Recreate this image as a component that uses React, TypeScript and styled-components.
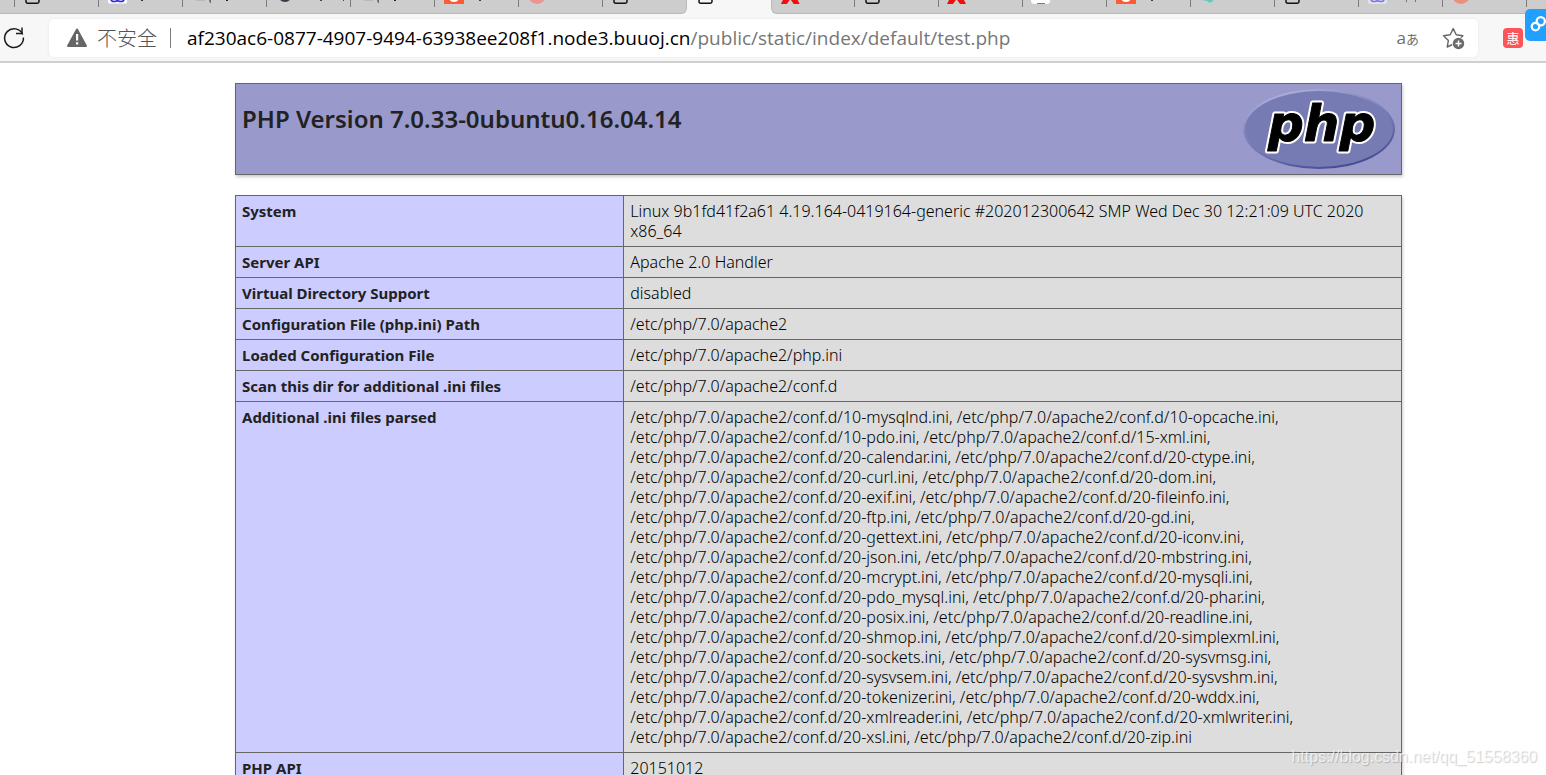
import React from "react";
import styled, { createGlobalStyle, css } from "styled-components";

const Global = createGlobalStyle`
  *, *::before, *::after { box-sizing: border-box; }
  body { margin: 0; background: #fff; color: #222; font-family: "Open Sans", "Noto Sans CJK SC", sans-serif; }
`;

const Window = styled.div`
  display: flex;
  flex-direction: column;
  height: 100vh;
  overflow: hidden;
  position: relative;
`;

/* ---------- tab strip ---------- */

const TabStrip = styled.nav`
  display: flex;
  flex: none;
  height: 14px;
  overflow: hidden;
  background: #f7f7f7;
`;

const Tab = styled.button<{ $divider?: boolean }>`
  display: flex;
  flex: none;
  align-items: flex-start;
  width: 84px;
  height: 7px;
  padding: 0;
  border: 0;
  border-left: 1px solid ${(p) => (p.$divider ? "#7b7b7b" : "transparent")};
  background: none;
  overflow: hidden;
`;

const TabGroup = styled.div<{ $side: "left" | "right" }>`
  display: flex;
  background: #cdcdcd;
  border-bottom: 1px solid #b9b9b9;
  ${(p) =>
    p.$side === "left"
      ? css`
          flex: none;
          padding-left: 14px;
          border-right: 1px solid #b9b9b9;
          border-bottom-right-radius: 6px;
        `
      : css`
          flex: 1;
          min-width: 0;
          overflow: hidden;
          border-left: 1px solid #b9b9b9;
          border-bottom-left-radius: 6px;

          ${Tab}:first-child {
            width: 82px;
          }
        `}
`;

type Kind = "doc" | "paw" | "text" | "round" | "orange" | "pink" | "red" | "google" | "teal" | "violet" | "peach" | "none";

const tabArt: Record<Kind, React.ReactNode> = {
  doc: <path d="M11-6V1.500Q11 3.200 12.700 3.200H22.300Q24 3.200 24 1.500V-6" fill="none" stroke="#111" strokeWidth="1.500" />,
  paw: (
    <>
      <path d="M9-6H28V2Q28 3.500 26.500 3.500H10.500Q9 3.500 9 2Z" fill="#fff" />
      <path d="M12-1Q12 1.500 15 1.500T18.500 0Q19 1.500 22 1.500T25-1" fill="none" stroke="#2a2ae0" strokeWidth="1.600" />
      <path d="M42 0h2v1h-2z" fill="#333" />
    </>
  ),
  text: (
    <>
      <path d="M13 0h9v1h-9z" fill="#b9b9b9" />
      <path d="M26 0h2v3h-1z" fill="#666" />
      <path d="M43 0h2v1h-2z" fill="#222" />
    </>
  ),
  round: (
    <>
      <circle cx="18" cy="-5" r="7" fill="#3a3848" />
      <path d="M53 0h2v1h-2zM76 0h1v1h-1z" fill="#444" />
    </>
  ),
  orange: (
    <>
      <path d="M9-8H29V4H9Z" fill="#ff5a33" />
      <path d="M14-3H24Q24 2 19 2T14-3Z" fill="#fff" />
      <path d="M44 0h2v1h-2z" fill="#345" />
    </>
  ),
  pink: <circle cx="18" cy="-5" r="9" fill="#e99595" />,
  red: <path d="M8 4L13-6H22L27 4H21L17.500-1L14 4Z" fill="#f30d0d" />,
  google: (
    <>
      <path d="M8-6H27V1Q27 4 23 4H12Q8 4 8 1Z" fill="#fff" />
      <path d="M14 3h4v1h-4z" fill="#e44b5b" />
      <path d="M18 3h4v1h-4z" fill="#3c83f0" />
    </>
  ),
  teal: <path d="M11 0L13-3H22V1L19 3L16 1Z" fill="#67c9b8" />,
  violet: (
    <>
      <path d="M9-6H28V2Q28 4 26 4H11Q9 4 9 2Z" fill="#e3e2ec" />
      <path d="M12-1Q12 1.500 15 1.500T18.500 0Q19 1.500 22 1.500T25-1" fill="none" stroke="#7a7ae0" strokeWidth="1.600" />
      <path d="M47 0h1v2h-1zM56 0h1v2h-1z" fill="#87705f" />
    </>
  ),
  peach: (
    <>
      <circle cx="18" cy="-5" r="9" fill="#e8917c" />
      <path d="M11-2Q15 2 21-2Z" fill="#d4d0cf" />
    </>
  ),
  none: null,
};

const TabIcon = ({ kind }: { kind: Kind }) => (
  <svg width="82" height="6" viewBox="0 0 82 6" aria-hidden="true">
    {tabArt[kind]}
  </svg>
);

const leftTabs: Kind[] = ["doc", "paw", "text", "round", "text", "orange", "pink", "doc"];
const rightTabs: Kind[] = ["red", "doc", "red", "google", "orange", "teal", "doc", "violet", "peach", "none"];

/* ---------- toolbar ---------- */

const Toolbar = styled.header`
  display: flex;
  flex: none;
  align-items: center;
  height: 49px;
  padding-top: 1px;
  background: #f7f7f7;
  border-bottom: 2px solid #cfcfcf;
`;

const IconButton = styled.button`
  display: flex;
  flex: none;
  padding: 0;
  border: 0;
  background: none;
`;

const ReloadButton = styled(IconButton)`
  width: 49px;
  padding-left: 2px;
`;

const AddressBar = styled.div`
  display: flex;
  flex: 1;
  align-items: center;
  min-width: 0;
  height: 38px;
  padding: 0 12px 0 17px;
  border-radius: 5px;
  background: #fff;
  box-shadow: 0 0 3px #e6e6e6;
`;

const SecurityLabel = styled.span`
  margin-left: 9px;
  padding-right: 13px;
  color: #555;
  font-family: "Noto Sans CJK SC", sans-serif;
  font-weight: 300;
  font-size: 20px;
  line-height: 30px;
`;

const Divider = styled.span`
  width: 1px;
  height: 20px;
  margin-right: 16px;
  background: #7d7d7d;
`;

const Url = styled.div`
  flex: 1;
  min-width: 0;
  overflow: hidden;
  white-space: nowrap;
  color: #767676;
  font-size: 19px;
  line-height: 30px;
`;

const Host = styled.span`
  color: #000;
`;

const TranslateButton = styled(IconButton)`
  align-items: baseline;
  margin-right: 23px;
  color: #6e6e6e;
  font-family: "Open Sans", "Noto Sans CJK JP", sans-serif;
  font-size: 17px;
  line-height: 24px;
`;

const Kana = styled.span`
  font-family: "Noto Sans CJK JP", sans-serif;
  font-size: 13px;
`;

const Extensions = styled.div`
  flex: none;
  width: 68px;
  padding-left: 25px;
`;

const RedExtension = styled(IconButton)`
  align-items: center;
  justify-content: center;
  width: 20px;
  height: 20px;
  border-radius: 4px;
  background: #fb5558;
  color: #fff;
  font-family: "Noto Sans CJK SC", sans-serif;
  font-size: 13px;
  line-height: 18px;
`;

const FloatingButton = styled(IconButton)`
  position: absolute;
  top: 9px;
  right: 0;
  width: 21px;
  height: 32px;
  align-items: center;
  border-radius: 5px 0 0 5px;
  background: #22a0ff;
  overflow: hidden;
`;

/* ---------- page ---------- */

const Page = styled.main`
  flex: 1;
  min-height: 0;
  overflow: hidden;
  padding: 20px 144px 0 235px;
`;

const Banner = styled.section`
  display: flex;
  align-items: flex-start;
  justify-content: space-between;
  min-height: 92px;
  padding: 5px 6px;
  border: 1px solid #666;
  background: #9999cc;
  box-shadow: 1px 2px 3px #ccc;
`;

const Title = styled.h1`
  margin: 14px 0 0;
  font-family: "Noto Sans", sans-serif;
  font-size: 24px;
  font-weight: 600;
  line-height: 32px;
`;

const InfoTable = styled.table`
  width: 100%;
  margin-top: 20px;
  border-collapse: collapse;
  table-layout: fixed;
  box-shadow: 1px 2px 3px #ccc;
  line-height: 20px;
`;

const cell = css`
  padding: 5px 6px;
  border: 1px solid #666;
  text-align: left;
  vertical-align: top;
`;

const Name = styled.th`
  ${cell}
  width: 33.3%;
  background: #ccccff;
  font-family: "Noto Sans", sans-serif;
  font-size: 15px;
  font-weight: 700;
`;

const Value = styled.td`
  ${cell}
  background: #dddddd;
  color: #000;
  font-family: "Noto Sans", sans-serif;
  font-size: 16px;
  font-weight: 300;
  white-space: pre-line;
`;

const Watermark = styled.div`
  position: absolute;
  right: 9px;
  bottom: 8px;
  color: rgba(255, 255, 255, 0.7);
  font-family: "Liberation Sans", sans-serif;
  font-size: 16px;
  line-height: 20px;
  text-shadow: 1px 1px 1px rgba(0, 0, 0, 0.2);
  pointer-events: none;
`;

const iniPairs = [
  ["10-mysqlnd", "10-opcache"],
  ["10-pdo", "15-xml"],
  ["20-calendar", "20-ctype"],
  ["20-curl", "20-dom"],
  ["20-exif", "20-fileinfo"],
  ["20-ftp", "20-gd"],
  ["20-gettext", "20-iconv"],
  ["20-json", "20-mbstring"],
  ["20-mcrypt", "20-mysqli"],
  ["20-pdo_mysql", "20-phar"],
  ["20-posix", "20-readline"],
  ["20-shmop", "20-simplexml"],
  ["20-sockets", "20-sysvmsg"],
  ["20-sysvsem", "20-sysvshm"],
  ["20-tokenizer", "20-wddx"],
  ["20-xmlreader", "20-xmlwriter"],
  ["20-xsl", "20-zip"],
];

const iniFiles = iniPairs
  .map((pair) => pair.map((name) => `/etc/php/7.0/apache2/conf.d/${name}.ini`).join(", "))
  .join(",\n");

const rows: [string, string][] = [
  ["System", "Linux 9b1fd41f2a61 4.19.164-0419164-generic #202012300642 SMP Wed Dec 30 12:21:09 UTC 2020\nx86_64"],
  ["Server API", "Apache 2.0 Handler"],
  ["Virtual Directory Support", "disabled"],
  ["Configuration File (php.ini) Path", "/etc/php/7.0/apache2"],
  ["Loaded Configuration File", "/etc/php/7.0/apache2/php.ini"],
  ["Scan this dir for additional .ini files", "/etc/php/7.0/apache2/conf.d"],
  ["Additional .ini files parsed", iniFiles],
  ["PHP API", "20151012"],
];

const PhpLogo = () => (
  <svg width="152" height="80" viewBox="0 0 152 80" role="img" aria-label="PHP logo">
    <defs>
      <linearGradient id="rim" x1="0.25" y1="0" x2="0.75" y2="1">
        <stop offset="0" stopColor="#b0b2dc" />
        <stop offset="0.35" stopColor="#8488bf" />
        <stop offset="0.65" stopColor="#6a6dab" />
        <stop offset="1" stopColor="#43458c" />
      </linearGradient>
    </defs>
    <ellipse cx="76" cy="40" rx="76" ry="40" fill="url(#rim)" />
    <ellipse cx="76" cy="40" rx="74" ry="38" fill="#777bb3" />
    <g fontFamily="DejaVu Sans" fontWeight="700" fontStyle="italic" fontSize="50" strokeLinejoin="round">
      <text x="25" y="52" fill="#fff" stroke="#fff" strokeWidth="5">php</text>
      <text x="25" y="52" fill="#000" stroke="#000" strokeWidth="1">php</text>
    </g>
  </svg>
);

export default function App() {
  return (
    <Window>
      <Global />
      <TabStrip aria-label="Tabs">
        <TabGroup $side="left">
          {leftTabs.map((kind, i) => (
            <Tab key={i} $divider aria-label={`Tab ${i + 1}`}>
              <TabIcon kind={kind} />
            </Tab>
          ))}
        </TabGroup>
        <Tab aria-label="Current tab">
          <TabIcon kind="doc" />
        </Tab>
        <TabGroup $side="right">
          {rightTabs.map((kind, i) => (
            <Tab key={i} $divider={i > 0} aria-label={`Tab ${i + 10}`}>
              <TabIcon kind={kind} />
            </Tab>
          ))}
        </TabGroup>
      </TabStrip>

      <Toolbar>
        <ReloadButton aria-label="Reload">
          <svg width="24" height="24" viewBox="0 0 24 24" fill="none" stroke="#1c1c1c" strokeWidth="1.500">
            <path d="M20.700 8.500A9.400 9.400 0 1 0 21.400 11.500" />
            <path d="M20 1.500V7.500H14" />
          </svg>
        </ReloadButton>
        <AddressBar>
          <svg width="22" height="20" viewBox="0 0 22 20" aria-hidden="true">
            <path d="M11 1.500L20 18H2Z" fill="#666" stroke="#666" strokeWidth="2" strokeLinejoin="round" />
            <path d="M10 6h2.200v6.500H10zM10 14.200h2.200v2.200H10z" fill="#fff" />
          </svg>
          <SecurityLabel>不安全</SecurityLabel>
          <Divider />
          <Url role="textbox" aria-label="Address" tabIndex={0}>
            <Host>af230ac6-0877-4907-9494-63938ee208f1.node3.buuoj.cn</Host>/public/static/index/default/test.php
          </Url>
          <TranslateButton aria-label="Translate">
            a<Kana>あ</Kana>
          </TranslateButton>
          <IconButton aria-label="Add to favourites">
            <svg width="24" height="24" viewBox="0 0 24 24">
              <path
                d="M11.500 18L5.200 21L6.400 14.400L1.500 9.700L8.200 8.700L11.200 2.600L14.200 8.700L20.900 9.700L16.500 14"
                fill="none"
                stroke="#666"
                strokeWidth="1.400"
                strokeLinejoin="round"
              />
              <circle cx="16.500" cy="17.500" r="6.500" fill="#fff" />
              <circle cx="16.500" cy="17.500" r="5.700" fill="#6b6b6b" />
              <path d="M16.500 14.500v6M13.500 17.500h6" stroke="#fff" strokeWidth="1.500" />
            </svg>
          </IconButton>
        </AddressBar>
        <Extensions>
          <RedExtension>惠</RedExtension>
        </Extensions>
      </Toolbar>
      <FloatingButton aria-label="Share link">
        <svg width="28" height="32" viewBox="0 0 28 32" fill="none" stroke="#fff" strokeWidth="3">
          <circle cx="14" cy="18" r="5" />
          <circle cx="21" cy="11" r="5.500" />
        </svg>
      </FloatingButton>

      <Page>
        <Banner>
          <Title>PHP Version 7.0.33-0ubuntu0.16.04.14</Title>
          <PhpLogo />
        </Banner>
        <InfoTable>
          <tbody>
            {rows.map(([name, value]) => (
              <tr key={name}>
                <Name scope="row">{name}</Name>
                <Value>{value}</Value>
              </tr>
            ))}
          </tbody>
        </InfoTable>
      </Page>
      <Watermark>https://blog.csdn.net/qq_51558360</Watermark>
    </Window>
  );
}
